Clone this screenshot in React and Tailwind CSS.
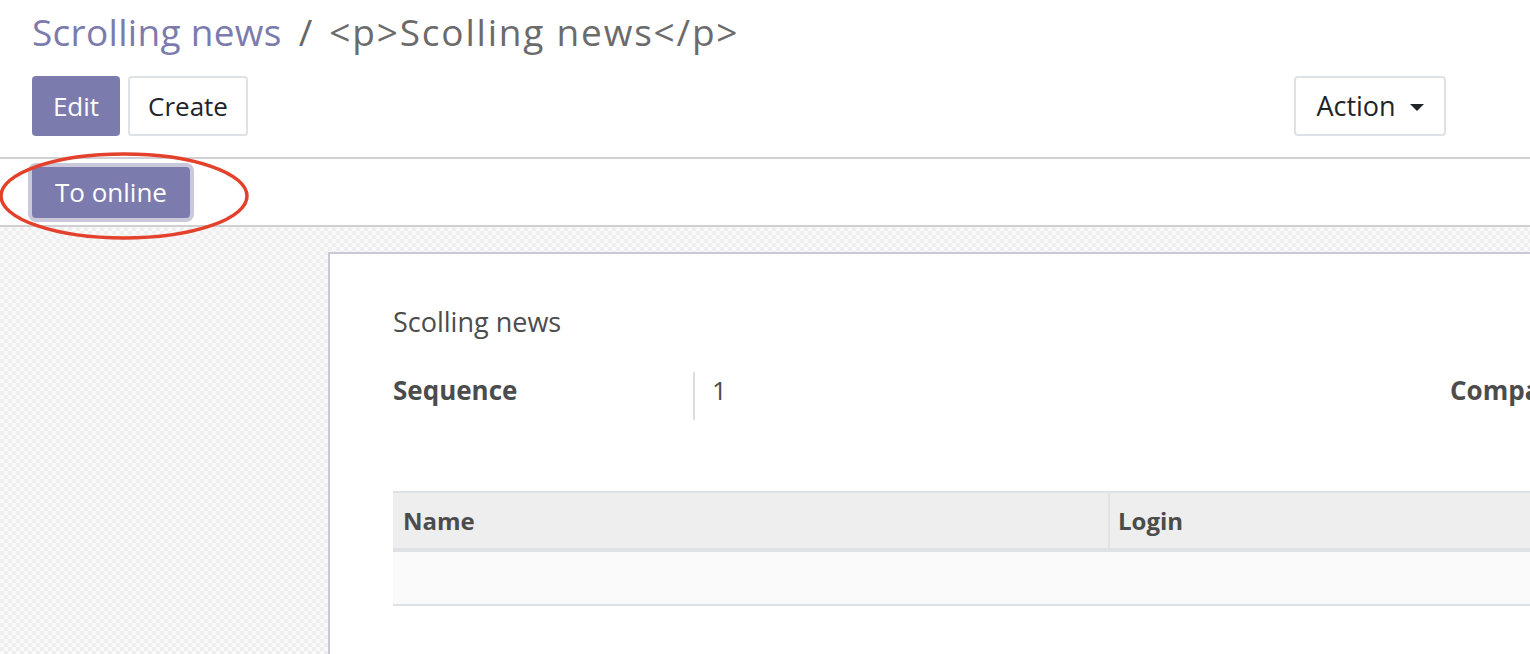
import React from 'react';

function App() {
  return (
    <div className="relative w-full h-[654px] overflow-hidden bg-white font-['Open_Sans',sans-serif] flex flex-col">
      {/* control panel */}
      <div className="px-[32px] pt-[7px] shrink-0">
        <div className="h-[48px] flex items-center text-[37px] leading-none">
          <span className="text-[#7c7bad] tracking-[0.3px]">Scrolling news</span>
          <span className="text-[#666666] mx-[17px]">/</span>
          <span className="text-[#6b6b6b] tracking-[1.8px]">&lt;p&gt;Scolling news&lt;/p&gt;</span>
        </div>
        <div className="mt-[21px] pb-[21px] flex items-center">
          <button className="h-[60px] w-[88px] rounded-[4px] bg-[#7c7bad] text-white text-[26px]">Edit</button>
          <button className="ml-[8px] h-[60px] w-[120px] rounded-[4px] border-2 border-[#dee2e6] bg-white text-[#212529] text-[26px]">Create</button>
          <button className="ml-auto mr-[52px] h-[60px] w-[152px] rounded-[4px] border-2 border-[#dee2e6] bg-white text-[#212529] text-[27px] flex items-center justify-center gap-[14px]">
            <span>Action</span>
            <span className="w-0 h-0 border-l-[7px] border-r-[7px] border-t-[7px] border-l-transparent border-r-transparent border-t-[#212529] mt-[2px]" />
          </button>
        </div>
      </div>
      <div className="h-[2px] bg-[#d0d0d4] shrink-0" />

      {/* statusbar */}
      <div className="h-[66px] shrink-0 flex items-center px-[32px]">
        <button className="h-[51px] w-[158px] rounded-[4px] bg-[#7c7bad] text-white text-[26px] ring-4 ring-[#c9c9db]">To online</button>
      </div>
      <div className="h-[2px] bg-[#d0d0d4] shrink-0" />

      {/* form area */}
      <div className="flex-1 pl-[328px] pt-[25px] bg-[#f7f7f7] bg-[repeating-conic-gradient(#efefef_0_25%,#f9f9f9_0_50%)] bg-[length:8px_8px]">
        <div className="w-[1400px] h-full bg-white border-l-2 border-t-2 border-[#c8c8d6] pl-[63px] pt-[50px] text-[#4c4c4c]">
          <div className="text-[27px] leading-[36px]">Scolling news</div>
          <div className="mt-[32px] flex items-start">
            <div className="w-[1057px] flex items-start">
              <div className="w-[300px] text-[26px] leading-[36px] font-bold">Sequence</div>
              <div className="h-[48px] w-[2px] bg-[#dcdcdc]" />
              <div className="pl-[17px] text-[26px] leading-[36px]">1</div>
            </div>
            <div className="text-[26px] leading-[36px] font-bold">Company</div>
          </div>

          <div className="mt-[71px] w-[1400px]">
            <div className="flex border-t-2 border-[#dee2e6] bg-[#eeeeee] h-[57px]">
              <div className="w-[717px] flex items-center pl-[10px] text-[24px] font-bold border-r-2 border-[#e2e2e2]">Name</div>
              <div className="flex-1 flex items-center pl-[8px] text-[24px] font-bold">Login</div>
            </div>
            <div className="h-[4px] bg-[#dee2e6]" />
            <div className="h-[54px] bg-[#fafafa] border-b-2 border-[#dee2e6]" />
          </div>
        </div>
      </div>

      {/* annotation */}
      <svg className="absolute left-0 top-[150px]" width="256" height="94" viewBox="0 0 256 94">
        <ellipse cx="124" cy="46" rx="123" ry="42" fill="none" stroke="#e3412b" strokeWidth="3.5" />
      </svg>
    </div>
  );
}

export default App;
